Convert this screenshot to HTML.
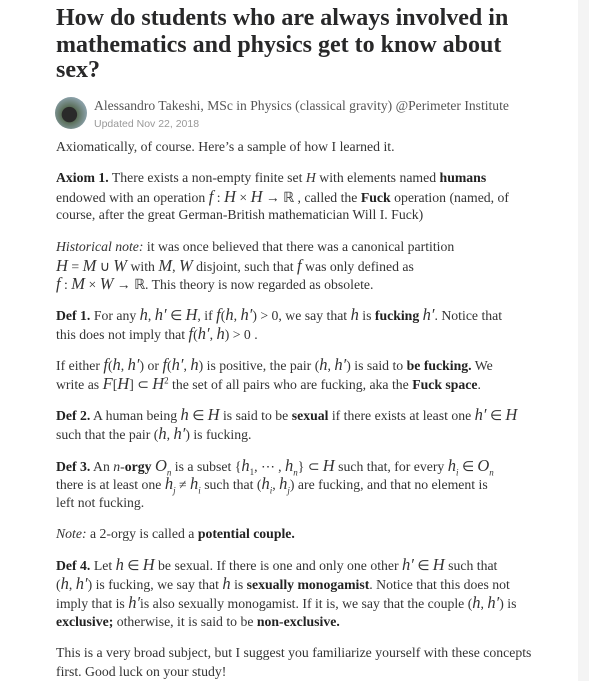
<!DOCTYPE html>
<html><head><meta charset="utf-8"><style>
html,body{margin:0;padding:0;background:#fff;width:589px;height:681px;overflow:hidden;position:relative}
.side{position:absolute;left:578px;top:0;width:11px;height:681px;background:#f4f4f4}
.l{position:absolute;left:56px;white-space:nowrap;font-family:"Liberation Serif",serif;font-size:13.75px;color:#333;line-height:19px}
.t{position:absolute;left:56px;white-space:nowrap;font-family:"Liberation Serif",serif;font-size:24px;font-weight:bold;color:#282829;line-height:26px}
i.m{font-family:"Liberation Serif",serif;font-style:italic;font-size:16.5px}
b{color:#222}
.av{position:absolute;left:55px;top:97px;width:32px;height:32px;border-radius:50%;background:radial-gradient(circle at 45% 55%,#2a2a2a 0 30%,#5a6e58 32%,#8aa0a8 70%,#50604a 100%)}
</style></head><body>
<div class="side"></div>
<div class="t" style="top:5px">How do students who are always involved in</div>
<div class="t" style="top:32px">mathematics and physics get to know about</div>
<div class="t" style="top:57px">sex?</div>
<div class="av"></div>
<div class="l" style="left:94px;top:96px;font-size:13.6px;color:#555">Alessandro Takeshi, MSc in Physics (classical gravity) @Perimeter Institute</div>
<div class="l" style="left:94px;top:115px;font-family:'Liberation Sans',sans-serif;font-size:10.5px;color:#999">Updated Nov 22, 2018</div>
<div class="l" style="top:137px">Axiomatically, of course. Here’s a sample of how I learned it.</div>
<div class="l" style="top:168px"><b>Axiom 1.</b> There exists a non-empty finite set <i>H</i> with elements named <b>humans</b></div>
<div class="l" style="top:187px">endowed with an operation <i class="m">f</i> : <i class="m">H</i> × <i class="m">H</i> → ℝ , called the <b>Fuck</b> operation (named, of</div>
<div class="l" style="top:205px">course, after the great German-British mathematician Will I. Fuck)</div>
<div class="l" style="top:237px"><i>Historical note:</i> it was once believed that there was a canonical partition</div>
<div class="l" style="top:256px"><i class="m">H</i> = <i class="m">M</i> ∪ <i class="m">W</i> with <i class="m">M</i>, <i class="m">W</i> disjoint, such that <i class="m">f</i> was only defined as</div>
<div class="l" style="top:274px"><i class="m">f</i> : <i class="m">M</i> × <i class="m">W</i> → ℝ. This theory is now regarded as obsolete.</div>
<div class="l" style="top:305px"><b>Def 1.</b> For any <i class="m">h</i>, <i class="m">h′</i> ∈ <i class="m">H</i>, if <i class="m">f</i>(<i class="m">h</i>, <i class="m">h′</i>) &gt; 0, we say that <i class="m">h</i> is <b>fucking</b> <i class="m">h′</i>.  Notice that</div>
<div class="l" style="top:324px">this does not imply that <i class="m">f</i>(<i class="m">h′</i>, <i class="m">h</i>) &gt; 0 .</div>
<div class="l" style="top:355px">If either <i class="m">f</i>(<i class="m">h</i>, <i class="m">h′</i>) or <i class="m">f</i>(<i class="m">h′</i>, <i class="m">h</i>) is positive, the pair (<i class="m">h</i>, <i class="m">h′</i>) is said to <b>be fucking.</b> We</div>
<div class="l" style="top:374px">write as <i class="m">F</i>[<i class="m">H</i>] ⊂ <i class="m">H</i><sup style="font-size:9px;line-height:0">2</sup> the set of all pairs who are fucking, aka the <b>Fuck space</b>.</div>
<div class="l" style="top:405px"><b>Def 2.</b> A human being <i class="m">h</i> ∈ <i class="m">H</i> is said to be <b>sexual</b> if there exists at least one <i class="m">h′</i> ∈ <i class="m">H</i></div>
<div class="l" style="top:424px">such that the pair (<i class="m">h</i>, <i class="m">h′</i>) is fucking.</div>
<div class="l" style="top:456px"><b>Def 3.</b> An <i>n</i>-<b>orgy</b> <i class="m">O<sub style="font-size:9px;line-height:0">n</sub></i> is a subset {<i class="m">h</i><sub style="font-size:9px;line-height:0">1</sub>, ⋯ , <i class="m">h<sub style="font-size:9px;line-height:0">n</sub></i>} ⊂ <i class="m">H</i> such that, for every <i class="m">h<sub style="font-size:9px;line-height:0">i</sub></i> ∈ <i class="m">O<sub style="font-size:9px;line-height:0">n</sub></i></div>
<div class="l" style="top:474px">there is at least one <i class="m">h<sub style="font-size:9px;line-height:0">j</sub></i> ≠ <i class="m">h<sub style="font-size:9px;line-height:0">i</sub></i> such that (<i class="m">h<sub style="font-size:9px;line-height:0">i</sub></i>, <i class="m">h<sub style="font-size:9px;line-height:0">j</sub></i>) are fucking, and that no element is</div>
<div class="l" style="top:493px">left not fucking.</div>
<div class="l" style="top:524px"><i>Note:</i> a 2-orgy is called a <b>potential couple.</b></div>
<div class="l" style="top:555px"><b>Def 4.</b> Let <i class="m">h</i> ∈ <i class="m">H</i> be sexual. If there is one and only one other <i class="m">h′</i> ∈ <i class="m">H</i> such that</div>
<div class="l" style="top:574px">(<i class="m">h</i>, <i class="m">h′</i>) is fucking, we say that <i class="m">h</i> is <b>sexually monogamist</b>. Notice that this does not</div>
<div class="l" style="top:593px">imply that is <i class="m">h′</i>is also sexually monogamist. If it is, we say that the couple (<i class="m">h</i>, <i class="m">h′</i>) is</div>
<div class="l" style="top:612px"><b>exclusive;</b> otherwise, it is said to be <b>non-exclusive.</b></div>
<div class="l" style="top:643px">This is a very broad subject, but I suggest you familiarize yourself with these concepts</div>
<div class="l" style="top:662px">first. Good luck on your study!</div>
</body></html>
